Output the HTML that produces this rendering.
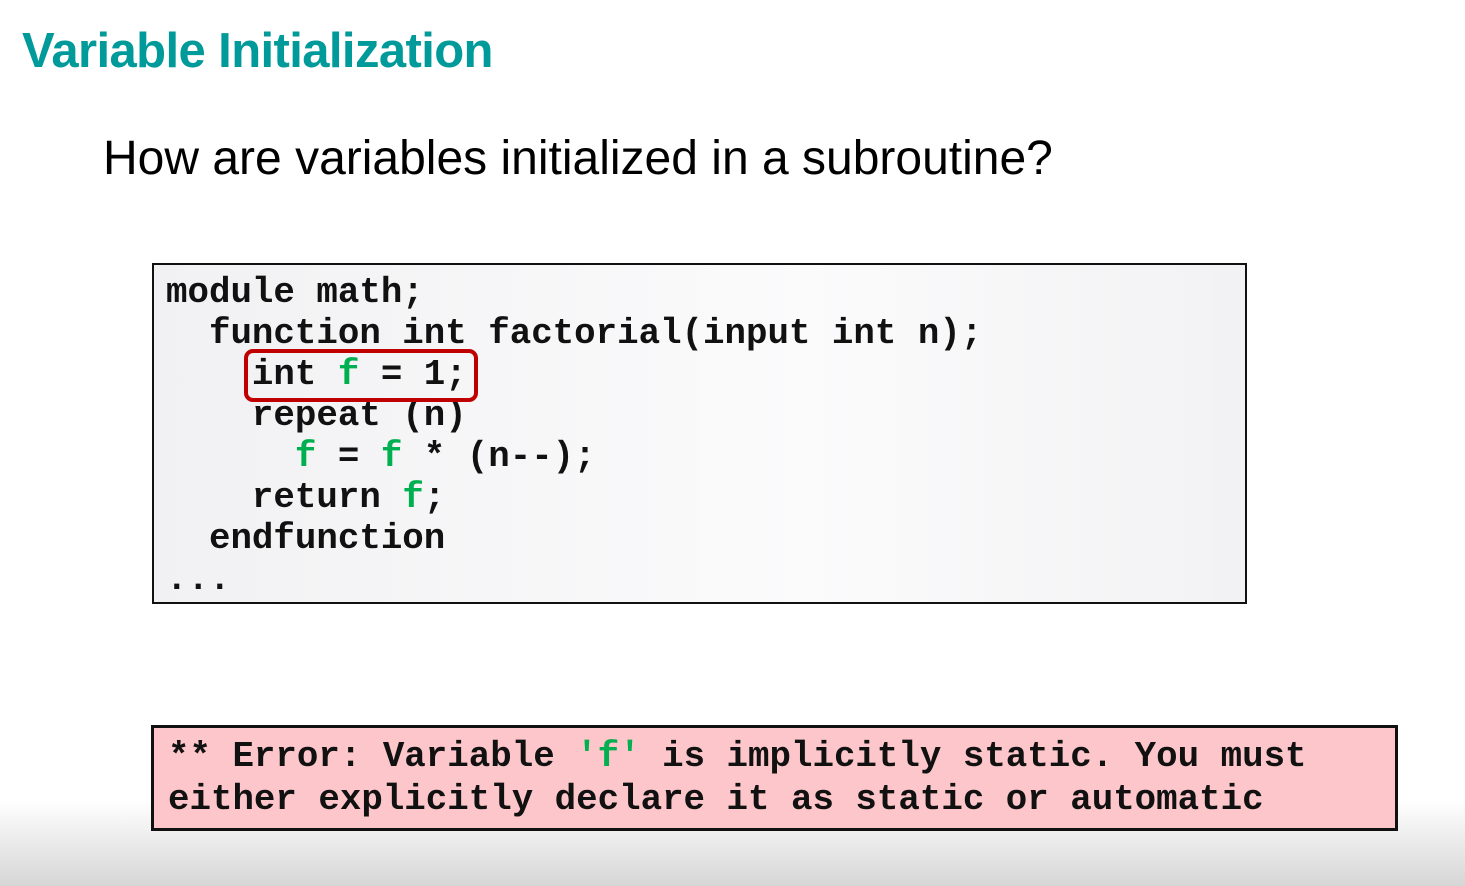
<!DOCTYPE html>
<html><head><style>
body{margin:0;width:1465px;height:886px;position:relative;overflow:hidden;background:linear-gradient(to bottom,#fff 0,#fff 800px,#d6d6d6 886px);font-family:"Liberation Sans",sans-serif;}
.t{position:absolute;left:22px;top:23px;font-size:49px;font-weight:bold;color:#009a9a;letter-spacing:-0.6px;}
.q{position:absolute;left:103px;top:131px;font-size:48px;color:#000;}
.code{position:absolute;left:152px;top:263px;width:1091px;height:337px;border:2px solid #111;background:linear-gradient(to right,#f1f1f3,#fbfbfc 60%,#f2f2f4);}
pre{margin:0;position:absolute;font-family:"Liberation Mono",monospace;font-weight:bold;font-size:35.8px;color:#111;}
.g{color:#00b050;}
.box{position:absolute;left:244px;top:349px;width:226px;height:45px;border:4px solid #c00000;border-radius:9px;}
.err{position:absolute;left:151px;top:725px;width:1241px;height:100px;border:3px solid #111;background:#fdc6ca;}
</style></head><body>
<div class="t">Variable Initialization</div>
<div class="q">How are variables initialized in a subroutine?</div>
<div class="code"></div>
<pre style="left:166px;top:272px;line-height:41px;">module math;
  function int factorial(input int n);
    int <span class="g">f</span> = 1;
    repeat (n)
      <span class="g">f</span> = <span class="g">f</span> * (n--);
    return <span class="g">f</span>;
  endfunction
...</pre>
<div class="box"></div>
<div class="err"></div>
<pre style="left:168px;top:735px;line-height:43px;">** Error: Variable <span class="g">'f'</span> is implicitly static. You must
either explicitly declare it as static or automatic</pre>
</body></html>
